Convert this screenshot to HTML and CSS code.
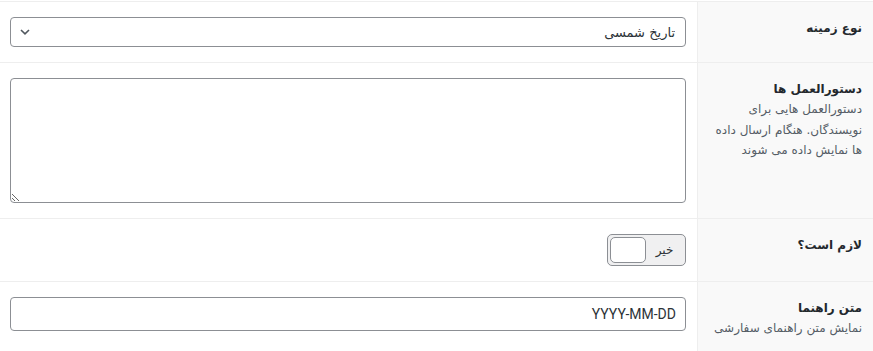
FILE: index.html
```html
<!doctype html>
<html lang="fa" dir="rtl">
<head>
    <meta charset="UTF-8">
    <title>تنظیمات زمینه</title>
    <link rel="stylesheet" href="styles.css">
</head>
<body>
<div class="fields">

    <div class="row">
        <div class="label-cell">
            <label for="type">نوع زمینه</label>
        </div>
        <div class="input-cell">
            <div class="select-wrap">
                <select id="type" class="field">
                    <option>تاریخ شمسی</option>
                </select>
                <svg class="chevron" width="12" height="8" viewBox="0 0 12 8">
                    <path d="M2 2 L6 5.8 L10 2" fill="none" stroke="#50575e" stroke-width="1.6"/>
                </svg>
            </div>
        </div>
    </div>

    <div class="row">
        <div class="label-cell">
            <label for="instructions">دستورالعمل ها</label>
            <p class="desc">دستورالعمل هایی برای<br>نویسندگان. هنگام ارسال داده<br>ها نمایش داده می شوند</p>
        </div>
        <div class="input-cell">
            <textarea id="instructions" class="field area"></textarea>
        </div>
    </div>

    <div class="row">
        <div class="label-cell">
            <label>لازم است؟</label>
        </div>
        <div class="input-cell">
            <div class="toggle">
                <span class="toggle-text">خیر</span>
                <span class="toggle-knob"></span>
            </div>
        </div>
    </div>

    <div class="row">
        <div class="label-cell">
            <label for="placeholder">متن راهنما</label>
            <p class="desc">نمایش متن راهنمای سفارشی</p>
        </div>
        <div class="input-cell">
            <input type="text" id="placeholder" class="field text" value="YYYY-MM-DD">
        </div>
    </div>

</div>
</body>
</html>
```

FILE: styles.css
```css
body {
    margin: 0;
    background: #fff;
    color: #1d2327;
    font-family: "DejaVu Sans", "Noto Sans", sans-serif;
    font-size: 13px;
}

.fields {
    padding-top: 1px;
}

.row {
    display: flex;
    border-top: 1px solid #eeeeee;
}

.label-cell {
    width: 162px;
    flex: none;
    padding: 15px 11px 15px 2px;
    background: #f9f9f9;
    border-left: 1px solid #eeeeee;
}

.label-cell label {
    display: block;
    font-weight: bold;
    font-size: 12px;
    line-height: 20px;
    margin-top: 1px;
    color: #23282d;
}

.desc {
    margin: 0;
    color: #555d66;
    font-size: 12px;
    line-height: 20.5px;
    white-space: nowrap;
}

.input-cell {
    flex: 1;
    padding: 15px 11px 15px 10px;
}

.field {
    display: block;
    width: 100%;
    box-sizing: border-box;
    border: 1px solid #8c8f94;
    border-radius: 4px;
    background: #fff;
    color: #2c3338;
    font-family: "DejaVu Sans", "Noto Sans", sans-serif;
    font-size: 13px;
    margin: 0;
    outline: none;
}

.select-wrap {
    position: relative;
}

select.field {
    appearance: none;
    -webkit-appearance: none;
    height: 30px;
    padding: 0 10px 0 30px;
}

.chevron {
    position: absolute;
    left: 9px;
    top: 11px;
}

.area {
    height: 125px;
    resize: vertical;
    padding: 6px 8px;
}

.text {
    height: 34px;
    padding: 0 9px;
    font-family: Roboto, "DejaVu Sans", sans-serif;
    font-size: 14px;
    color: #2c3338;
}

.toggle {
    display: flex;
    align-items: center;
    width: 79px;
    height: 32px;
    box-sizing: border-box;
    border: 1px solid #8c8f94;
    border-radius: 5px;
    background: #f0f0f1;
    padding: 2px;
}

.toggle-text {
    flex: 1;
    text-align: center;
    font-size: 12px;
    color: #2c3338;
}

.toggle-knob {
    width: 36px;
    height: 26px;
    box-sizing: border-box;
    border: 1px solid #8c8f94;
    border-radius: 5px;
    background: #fff;
}
```
